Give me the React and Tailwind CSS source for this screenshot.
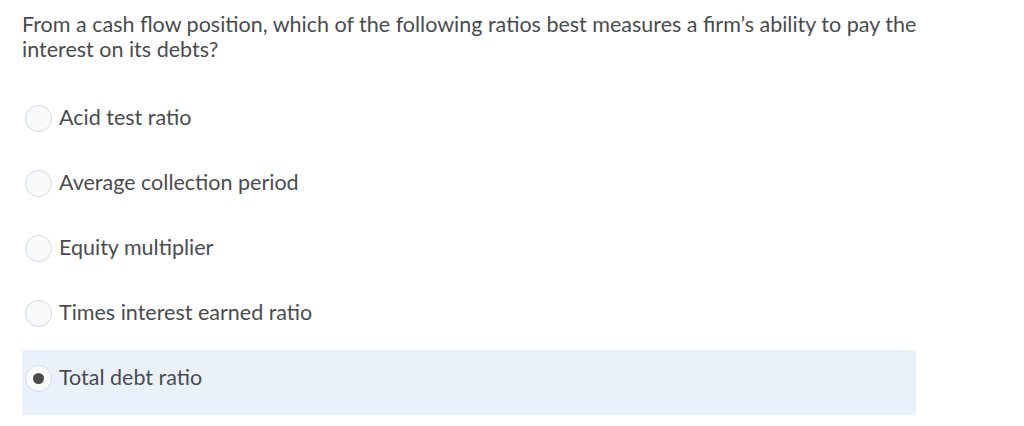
export default function App() {
  const options = [
    "Acid test ratio",
    "Average collection period",
    "Equity multiplier",
    "Times interest earned ratio",
    "Total debt ratio",
  ];
  const selected = 4;
  return (
    <div
      className="w-[1024px] h-[426px] bg-white text-[#494c4e]"
      style={{ fontFamily: "Lato, 'Open Sans', sans-serif" }}
    >
      <div className="ml-[22px] pt-[12px] w-[900px] h-[90px] text-[21.5px] leading-[25px]">
        From a cash flow position, which of the following ratios best measures a firm’s ability to pay the interest on its debts?
      </div>
      <div className="ml-[22px] w-[894px] flex flex-col">
        {options.map((o, i) => (
          <div
            key={o}
            className={
              "h-[65px] flex items-start pt-[14px] pl-[3px] " +
              (i === selected ? "bg-[#eaf1fb]" : "")
            }
          >
            <div className="mt-[1px] w-[27px] h-[27px] rounded-full border border-[#d3d9e3] bg-[#f9fafb] flex items-center justify-center shrink-0">
              {i === selected && (
                <div className="w-[11px] h-[11px] rounded-full bg-[#494c4e]" />
              )}
            </div>
            <span className="ml-[7px] text-[21.5px] leading-[27px]">{o}</span>
          </div>
        ))}
      </div>
    </div>
  );
}
